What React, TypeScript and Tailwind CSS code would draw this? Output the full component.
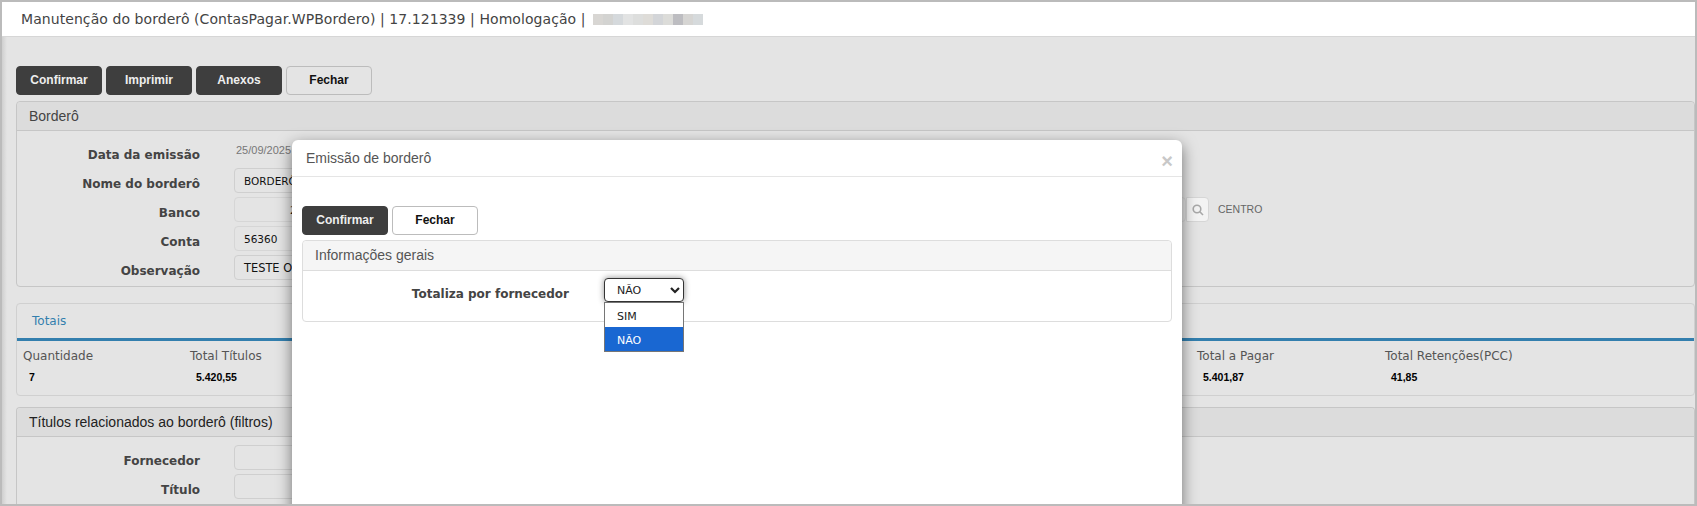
import React from "react";

const dv = "font-['DejaVu_Sans',sans-serif]";

function Label({ children }: { children: React.ReactNode }) {
  return (
    <div className={`w-[183px] shrink-0 mt-[6px] text-right text-[12px] leading-5 font-bold text-[#444] ${dv}`}>
      {children}
    </div>
  );
}

function Field({ children, w = "w-[200px]", extra = "" }: { children?: React.ReactNode; w?: string; extra?: string }) {
  return (
    <div className={`ml-[34px] h-[25px] ${w} shrink-0 rounded-[4px] border border-[#cfcfcf] pl-[9px] text-[10.5px] leading-[25px] text-[#111] whitespace-nowrap ${dv} ${extra}`}>
      {children}
    </div>
  );
}

function Btn({ children, dark }: { children: React.ReactNode; dark?: boolean }) {
  return (
    <div className={`w-[86px] h-[29px] rounded-[4px] text-center text-[12px] font-bold leading-[27px] border ${dark ? "bg-[#3e3e3e] border-[#3e3e3e] text-[#eee]" : "border-[#bcbcbc] text-[#111]"}`}>
      {children}
    </div>
  );
}

const blur = ["#d8d6d3", "#d3d3d1", "#d5d9dc", "#e2e3e3", "#dddedd", "#dedcd8", "#d3d5d8", "#dcdcd9", "#bdbdc1", "#d6d5d3", "#d6dadc"];

export default function App() {
  return (
    <div className="relative w-[1697px] h-[506px] overflow-hidden border-2 border-[#bbbbbb] bg-[#e4e4e4] font-['Liberation_Sans',sans-serif]">
      <div className="absolute left-0 top-0 bottom-0 w-[5px] bg-gradient-to-r from-[#cfcfcf] to-transparent" />

      {/* Title bar */}
      <div className={`relative flex items-center h-[35px] bg-white border-b border-[#d6d6d6] pl-[19px] pt-[1px] text-[14px] text-[#444] whitespace-nowrap ${dv}`}>
        <span className="tracking-[0.07px]">Manutenção do borderô (ContasPagar.WPBordero) | 17.121339 | Homologação |</span>
        <div className="ml-[7px] flex">
          {blur.map((c, i) => (
            <div key={i} className="w-[10px] h-[11px]" style={{ backgroundColor: c }} />
          ))}
        </div>
      </div>

      {/* Toolbar */}
      <div className="flex gap-[4px] pl-[14px] pt-[29px]">
        <Btn dark>Confirmar</Btn>
        <Btn dark>Imprimir</Btn>
        <Btn dark>Anexos</Btn>
        <Btn>Fechar</Btn>
      </div>

      {/* Borderô */}
      <div className="ml-[14px] mt-[6px] h-[186px] rounded-[4px] border border-[#c6c6c6]">
        <div className="h-[29px] bg-[#dcdcdc] border-b border-[#c6c6c6] pl-[12px] text-[14px] leading-[28px] text-[#444] rounded-t-[4px]">Borderô</div>
        <div className="pt-[8px]">
          <div className="flex h-[29px]">
            <Label>Data da emissão</Label>
            <div className="ml-[36px] mt-[5px] text-[11px] leading-[13px] text-[#777]">25/09/2025</div>
          </div>
          <div className="flex h-[29px]">
            <Label>Nome do borderô</Label>
            <Field>BORDERÔ</Field>
          </div>
          <div className="flex h-[29px]">
            <Label>Banco</Label>
            <Field w="w-[952px]" extra="border-[#d6d6d6] pl-[55px]">237</Field>
            <div className="h-[25px] w-[23px] shrink-0 rounded-r-[4px] border border-[#d6d6d6] bg-[#f3f3f3] flex items-center justify-center">
              <svg width="12" height="12" viewBox="0 0 12 12" fill="none" stroke="#a8a8a8" strokeWidth="1.6">
                <circle cx="5" cy="5" r="3.8" />
                <path d="M7.8 7.8L11 11" />
              </svg>
            </div>
            <div className="ml-[9px] mt-[5px] text-[10.5px] leading-[14px] text-[#666]">CENTRO</div>
          </div>
          <div className="flex h-[29px]">
            <Label>Conta</Label>
            <Field extra="border-[#d6d6d6]">56360</Field>
          </div>
          <div className="flex h-[29px]">
            <Label>Observação</Label>
            <Field><span className="text-[11.4px]">TESTE OK</span></Field>
          </div>
        </div>
      </div>

      {/* Totais */}
      <div className="ml-[14px] mt-[16px] h-[93px] rounded-[4px] border border-[#d0d0d0]">
        <div className={`h-[34px] border-b-[3px] border-[#337fae] box-content -mb-[3px] pl-[15px] text-[12px] leading-[35px] text-[#337fae] ${dv}`}>
          Totais
        </div>
        <div className="mt-[9px] pl-[6px] flex">
          {[
            ["Quantidade", "7", "w-[167px]"],
            ["Total Títulos", "5.420,55", "w-[1007px]"],
            ["Total a Pagar", "5.401,87", "w-[188px]"],
            ["Total Retenções(PCC)", "41,85", "w-[240px]"],
          ].map(([l, v, w]) => (
            <div key={l} className={`${w} shrink-0`}>
              <div className={`text-[12px] leading-[18px] text-[#555] ${dv}`}>{l}</div>
              <div className="mt-[6px] pl-[6px] text-[10.5px] font-bold leading-[12px] text-black">{v}</div>
            </div>
          ))}
        </div>
      </div>

      {/* Títulos */}
      <div className="ml-[14px] mt-[11px] h-[110px] rounded-t-[4px] border border-[#c6c6c6] border-b-0">
        <div className="h-[29px] bg-[#dcdcdc] border-b border-[#c6c6c6] pl-[12px] text-[14px] leading-[28px] text-[#222] rounded-t-[4px]">
          Títulos relacionados ao borderô (filtros)
        </div>
        <div className="pt-[8px]">
          <div className="flex h-[29px]">
            <Label>Fornecedor</Label>
            <Field />
          </div>
          <div className="flex h-[29px]">
            <Label>Título</Label>
            <Field />
          </div>
        </div>
      </div>

      {/* Modal */}
      <div className="absolute left-[290px] top-[138px] w-[890px] h-[400px] rounded-[6px] bg-white shadow-[0_5px_15px_rgba(0,0,0,0.5)]">
        <div className="relative h-[37px] border-b border-[#e5e5e5] pl-[14px] text-[14px] leading-[36px] text-[#555]">
          Emissão de borderô
          <span className="absolute right-[9px] top-[3px] text-[20px] font-bold leading-[37px] text-[#c8c8c8]">×</span>
        </div>
        <div className="flex gap-[4px] pl-[10px] pt-[29px]">
          <Btn dark>Confirmar</Btn>
          <Btn>Fechar</Btn>
        </div>
        <div className="ml-[10px] mt-[5px] w-[870px] h-[82px] rounded-[4px] border border-[#dddddd]">
          <div className="h-[30px] bg-[#f5f5f5] border-b border-[#dddddd] pl-[12px] text-[14px] leading-[29px] text-[#555] rounded-t-[4px]">
            Informações gerais
          </div>
          <div className="flex pt-[7px]">
            <div className={`w-[266px] shrink-0 mt-[6px] text-right text-[12px] font-bold leading-5 text-[#444] ${dv}`}>
              Totaliza por fornecedor
            </div>
            <div className="relative ml-[35px] w-[80px] h-[24px]">
              <div className={`flex items-center justify-between h-[24px] rounded-[4px] border border-[#333] bg-white pl-[12px] pr-[2px] pt-[2px] text-[11px] text-[#222] shadow-[0_0_6px_rgba(0,0,0,0.45)] ${dv}`}>
                NÃO
                <svg width="12" height="12" viewBox="0 0 12 12" fill="none" stroke="#222" strokeWidth="2.2" className="-mt-[2px]">
                  <path d="M2 4l4 4 4-4" />
                </svg>
              </div>
              <div className={`absolute left-0 top-full w-[80px] h-[50px] border border-[#767676] bg-white text-[11px] ${dv}`}>
                <div className="h-[24px] pl-[12px] leading-[27px] text-[#222]">SIM</div>
                <div className="h-[24px] pl-[12px] leading-[27px] bg-[#1967d2] text-white">NÃO</div>
              </div>
            </div>
          </div>
        </div>
      </div>
    </div>
  );
}
